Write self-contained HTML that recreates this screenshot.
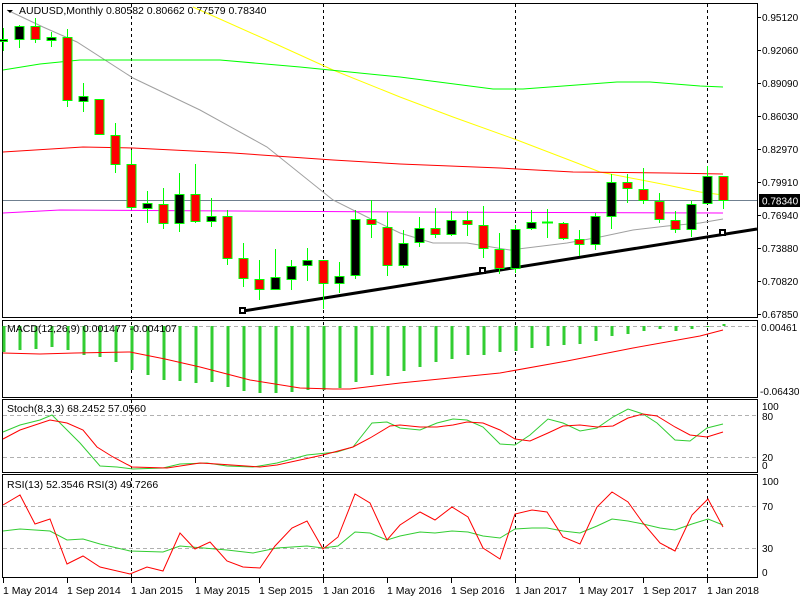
<!DOCTYPE html>
<html><head><meta charset="utf-8"><style>
html,body{margin:0;padding:0;background:#fff;width:800px;height:600px;overflow:hidden}
svg{display:block}
text{font-family:"Liberation Sans",sans-serif;font-size:10.5px;fill:#000}
.ax text{font-size:10px}
</style></head><body>
<svg width="800" height="600" viewBox="0 0 800 600" xmlns="http://www.w3.org/2000/svg">
<rect width="800" height="600" fill="#fff"/>
<g fill="none" stroke="#000" stroke-width="1">
<rect x="2.5" y="3.5" width="755" height="314"/>
<rect x="2.5" y="320.5" width="755" height="77"/>
<rect x="2.5" y="399.5" width="755" height="73"/>
<rect x="2.5" y="474.5" width="755" height="103"/>
</g>
<g stroke="#b0b0b0" stroke-dasharray="4,3" stroke-width="1">
<line x1="3" x2="757" y1="326.5" y2="326.5"/>
<line x1="3" x2="757" y1="415.5" y2="415.5"/>
<line x1="3" x2="757" y1="457.5" y2="457.5"/>
<line x1="3" x2="757" y1="506.5" y2="506.5"/>
<line x1="3" x2="757" y1="548.5" y2="548.5"/>
</g>
<g stroke="#000" stroke-dasharray="3,3" stroke-width="1">
<line x1="131.5" x2="131.5" y1="4" y2="578"/>
<line x1="323.5" x2="323.5" y1="4" y2="578"/>
<line x1="515.5" x2="515.5" y1="4" y2="578"/>
<line x1="707.5" x2="707.5" y1="4" y2="578"/>
</g>
<line x1="3" x2="757" y1="200.5" y2="200.5" stroke="#708090"/>
<g fill="none" stroke-width="1">
<polyline stroke="#a0a0a0" points="7,10 43,27 77,42 133,78 200,110 267,147 333,200 367,217 400,233 433,243 467,243 510,250 567,243 600,237 633,230 667,226 700,223 723,219"/>
<polyline stroke="#ffff00" points="193,7 267,40 333,70 400,97 453,117 517,140 577,163 600,172 667,185 700,192 723,195"/>
<polyline stroke="#00ff00" points="3,70 40,64 80,60 220,60 300,67 400,77 493,89 523,89 617,82 650,82 700,86 723,87"/>
<polyline stroke="#ff0000" points="3,152 83,147 133,148 233,153 333,160 400,164 500,168 573,172 667,173 723,174"/>
<polyline stroke="#ff00ff" points="3,213 60,210 400,212 723,213"/>
</g>
<line x1="243" y1="311" x2="757" y2="229" stroke="#000" stroke-width="3"/>
<g fill="#fff" stroke="#000" stroke-width="2"><rect x="240" y="308" width="5" height="5"/><rect x="480" y="268" width="5" height="5"/><rect x="720" y="230" width="5" height="5"/></g>
<g stroke="#00ff00" stroke-width="1">
<line x1="3.5" x2="3.5" y1="28" y2="51"/><rect x="-1.5" y="39.5" width="9" height="2" fill="#000"/>
<line x1="19.5" x2="19.5" y1="25" y2="48"/><rect x="15" y="26.5" width="9" height="13" fill="#000"/>
<line x1="35.5" x2="35.5" y1="18" y2="43"/><rect x="31" y="26.5" width="9" height="13" fill="#f00"/>
<line x1="51.5" x2="51.5" y1="32" y2="47"/><rect x="47" y="37.5" width="9" height="3" fill="#000"/>
<line x1="67.5" x2="67.5" y1="29" y2="107"/><rect x="63" y="37.5" width="9" height="63" fill="#f00"/>
<line x1="83.5" x2="83.5" y1="83" y2="112"/><rect x="79" y="96.5" width="9" height="5" fill="#000"/>
<line x1="99.5" x2="99.5" y1="99" y2="135"/><rect x="95" y="99.5" width="9" height="35" fill="#f00"/>
<line x1="115.5" x2="115.5" y1="123" y2="173"/><rect x="111" y="135.5" width="9" height="29" fill="#f00"/>
<line x1="131.5" x2="131.5" y1="150" y2="210"/><rect x="127" y="164.5" width="9" height="43" fill="#f00"/>
<line x1="147.5" x2="147.5" y1="191" y2="223"/><rect x="143" y="203.5" width="9" height="5" fill="#000"/>
<line x1="163.5" x2="163.5" y1="188" y2="229"/><rect x="159" y="204.5" width="9" height="19" fill="#f00"/>
<line x1="179.5" x2="179.5" y1="173" y2="232"/><rect x="175" y="194.5" width="9" height="29" fill="#000"/>
<line x1="195.5" x2="195.5" y1="164" y2="223"/><rect x="191" y="194.5" width="9" height="27" fill="#f00"/>
<line x1="211.5" x2="211.5" y1="198" y2="227"/><rect x="207" y="216.5" width="9" height="5" fill="#000"/>
<line x1="227.5" x2="227.5" y1="210" y2="265"/><rect x="223" y="216.5" width="9" height="42" fill="#f00"/>
<line x1="243.5" x2="243.5" y1="243" y2="287"/><rect x="239" y="258.5" width="9" height="20" fill="#f00"/>
<line x1="259.5" x2="259.5" y1="260" y2="300"/><rect x="255" y="279.5" width="9" height="10" fill="#f00"/>
<line x1="275.5" x2="275.5" y1="249" y2="290"/><rect x="271" y="277.5" width="9" height="12" fill="#000"/>
<line x1="291.5" x2="291.5" y1="260" y2="290"/><rect x="287" y="266.5" width="9" height="13" fill="#000"/>
<line x1="307.5" x2="307.5" y1="248" y2="281"/><rect x="303" y="260.5" width="9" height="5" fill="#000"/>
<line x1="323.5" x2="323.5" y1="260" y2="309"/><rect x="319" y="260.5" width="9" height="23" fill="#f00"/>
<line x1="339.5" x2="339.5" y1="262" y2="293"/><rect x="335" y="276.5" width="9" height="7" fill="#000"/>
<line x1="355.5" x2="355.5" y1="210" y2="279"/><rect x="351" y="219.5" width="9" height="56" fill="#000"/>
<line x1="371.5" x2="371.5" y1="200" y2="238"/><rect x="367" y="219.5" width="9" height="5" fill="#f00"/>
<line x1="387.5" x2="387.5" y1="212" y2="276"/><rect x="383" y="227.5" width="9" height="38" fill="#f00"/>
<line x1="403.5" x2="403.5" y1="230" y2="268"/><rect x="399" y="243.5" width="9" height="22" fill="#000"/>
<line x1="419.5" x2="419.5" y1="217" y2="247"/><rect x="415" y="228.5" width="9" height="14" fill="#000"/>
<line x1="435.5" x2="435.5" y1="208" y2="238"/><rect x="431" y="228.5" width="9" height="6" fill="#f00"/>
<line x1="451.5" x2="451.5" y1="211" y2="236"/><rect x="447" y="220.5" width="9" height="14" fill="#000"/>
<line x1="467.5" x2="467.5" y1="211" y2="236"/><rect x="463" y="220.5" width="9" height="4" fill="#f00"/>
<line x1="483.5" x2="483.5" y1="206" y2="258"/><rect x="479" y="225.5" width="9" height="23" fill="#f00"/>
<line x1="499.5" x2="499.5" y1="233" y2="274"/><rect x="495" y="249.5" width="9" height="19" fill="#f00"/>
<line x1="515.5" x2="515.5" y1="225" y2="273"/><rect x="511" y="229.5" width="9" height="39" fill="#000"/>
<line x1="531.5" x2="531.5" y1="210" y2="230"/><rect x="527" y="222.5" width="9" height="6" fill="#000"/>
<line x1="547.5" x2="547.5" y1="209" y2="238"/><line x1="542" x2="553" y1="222.5" y2="222.5" stroke-width="2"/>
<line x1="563.5" x2="563.5" y1="222" y2="240"/><rect x="559" y="223.5" width="9" height="15" fill="#f00"/>
<line x1="579.5" x2="579.5" y1="230" y2="256"/><rect x="575" y="239.5" width="9" height="5" fill="#f00"/>
<line x1="595.5" x2="595.5" y1="213" y2="250"/><rect x="591" y="216.5" width="9" height="28" fill="#000"/>
<line x1="611.5" x2="611.5" y1="174" y2="229"/><rect x="607" y="182.5" width="9" height="34" fill="#000"/>
<line x1="627.5" x2="627.5" y1="174" y2="203"/><rect x="623" y="182.5" width="9" height="6" fill="#f00"/>
<line x1="643.5" x2="643.5" y1="168" y2="204"/><rect x="639" y="189.5" width="9" height="11" fill="#f00"/>
<line x1="659.5" x2="659.5" y1="193" y2="223"/><rect x="655" y="201.5" width="9" height="18" fill="#f00"/>
<line x1="675.5" x2="675.5" y1="211" y2="233"/><rect x="671" y="220.5" width="9" height="9" fill="#f00"/>
<line x1="691.5" x2="691.5" y1="201" y2="237"/><rect x="687" y="204.5" width="9" height="25" fill="#000"/>
<line x1="707.5" x2="707.5" y1="166" y2="203"/><rect x="703" y="176.5" width="9" height="27" fill="#000"/>
<line x1="723.5" x2="723.5" y1="176" y2="209"/><rect x="719" y="176.5" width="9" height="24" fill="#f00"/>
</g>
<g stroke="#32cd32" stroke-width="3">
<line x1="4" x2="4" y1="326" y2="352"/><line x1="20" x2="20" y1="326" y2="350"/><line x1="36" x2="36" y1="326" y2="349"/><line x1="52" x2="52" y1="326" y2="347"/><line x1="68" x2="68" y1="326" y2="350"/><line x1="84" x2="84" y1="326" y2="355"/><line x1="100" x2="100" y1="326" y2="357"/><line x1="116" x2="116" y1="326" y2="362"/><line x1="132" x2="132" y1="326" y2="370"/><line x1="148" x2="148" y1="326" y2="375"/><line x1="164" x2="164" y1="326" y2="380"/><line x1="180" x2="180" y1="326" y2="381"/><line x1="196" x2="196" y1="326" y2="383"/><line x1="212" x2="212" y1="326" y2="382"/><line x1="228" x2="228" y1="326" y2="387"/><line x1="244" x2="244" y1="326" y2="391"/><line x1="260" x2="260" y1="326" y2="393"/><line x1="276" x2="276" y1="326" y2="393"/><line x1="292" x2="292" y1="326" y2="392"/><line x1="308" x2="308" y1="326" y2="390"/><line x1="324" x2="324" y1="326" y2="390"/><line x1="340" x2="340" y1="326" y2="388"/><line x1="356" x2="356" y1="326" y2="382"/><line x1="372" x2="372" y1="326" y2="375"/><line x1="388" x2="388" y1="326" y2="376"/><line x1="404" x2="404" y1="326" y2="371"/><line x1="420" x2="420" y1="326" y2="367"/><line x1="436" x2="436" y1="326" y2="362"/><line x1="452" x2="452" y1="326" y2="359"/><line x1="468" x2="468" y1="326" y2="355"/><line x1="484" x2="484" y1="326" y2="355"/><line x1="500" x2="500" y1="326" y2="352"/><line x1="516" x2="516" y1="326" y2="351"/><line x1="532" x2="532" y1="326" y2="348"/><line x1="548" x2="548" y1="326" y2="346"/><line x1="564" x2="564" y1="326" y2="345"/><line x1="580" x2="580" y1="326" y2="344"/><line x1="596" x2="596" y1="326" y2="341"/><line x1="612" x2="612" y1="326" y2="336"/><line x1="628" x2="628" y1="326" y2="334"/><line x1="644" x2="644" y1="326" y2="331"/><line x1="660" x2="660" y1="326" y2="329"/><line x1="676" x2="676" y1="326" y2="331"/><line x1="692" x2="692" y1="326" y2="329"/><line x1="708" x2="708" y1="326" y2="327"/><line x1="724" x2="724" y1="324" y2="326"/>
</g>
<polyline fill="none" stroke="#f00" points="3,353 40,354 75,353 130,352 165,359 200,367 250,380 300,388 333,389 350,389 400,383 500,373 567,361 633,348 700,336 723,330"/>
<g fill="none">
<polyline stroke="#32cd32" points="3,432 20,425 40,420 52,415 57,420 80,443 100,466 117,467 133,469 163,468 180,464 207,463 227,466 253,467 277,463 307,455 337,452 353,447 372,423 387,422 400,428 420,430 437,423 453,419 467,420 483,427 500,444 515,445 530,435 548,419 563,423 580,431 597,428 613,417 628,409 643,414 657,423 675,440 690,441 707,428 723,424"/>
<polyline stroke="#f00" points="3,439 20,430 50,420 67,423 83,430 97,447 113,457 132,467 167,468 200,463 217,464 260,467 277,465 323,455 353,447 370,438 390,426 400,425 420,427 437,427 453,425 467,422 483,423 500,430 515,439 530,441 548,433 563,426 580,425 597,427 613,426 628,418 643,414 657,416 675,427 690,435 707,437 723,432"/>
</g>
<g fill="none">
<polyline stroke="#32cd32" points="3,531 20,529 50,531 67,540 83,539 100,544 130,551 163,552 180,546 227,550 253,553 277,548 307,546 323,548 338,546 355,532 370,533 387,540 400,536 420,532 435,533 452,531 468,532 483,536 500,538 515,529 532,528 547,528 563,531 580,533 597,526 612,519 628,521 643,524 660,528 675,530 692,524 708,519 723,525"/>
<polyline stroke="#f00" points="3,505 20,495 35,524 50,519 67,564 83,556 100,567 130,574 147,567 163,571 180,533 195,549 210,542 227,561 243,567 260,568 275,546 292,528 307,521 323,549 338,537 355,494 370,503 387,540 400,525 420,512 435,520 452,507 468,517 483,548 500,559 515,514 532,510 547,512 563,537 580,544 597,507 612,492 628,502 643,523 660,543 675,551 692,515 708,499 723,527"/>
</g>
<g stroke="#000">
<line x1="757" x2="761" y1="17.5" y2="17.5"/><line x1="757" x2="761" y1="50.5" y2="50.5"/><line x1="757" x2="761" y1="83.5" y2="83.5"/><line x1="757" x2="761" y1="116.5" y2="116.5"/><line x1="757" x2="761" y1="149.5" y2="149.5"/><line x1="757" x2="761" y1="182.5" y2="182.5"/><line x1="757" x2="761" y1="215.5" y2="215.5"/><line x1="757" x2="761" y1="248.5" y2="248.5"/><line x1="757" x2="761" y1="281.5" y2="281.5"/><line x1="757" x2="761" y1="314.5" y2="314.5"/>
<line x1="3.5" x2="3.5" y1="578" y2="583"/><line x1="67.5" x2="67.5" y1="578" y2="583"/><line x1="131.5" x2="131.5" y1="578" y2="583"/><line x1="195.5" x2="195.5" y1="578" y2="583"/><line x1="259.5" x2="259.5" y1="578" y2="583"/><line x1="323.5" x2="323.5" y1="578" y2="583"/><line x1="387.5" x2="387.5" y1="578" y2="583"/><line x1="451.5" x2="451.5" y1="578" y2="583"/><line x1="515.5" x2="515.5" y1="578" y2="583"/><line x1="579.5" x2="579.5" y1="578" y2="583"/><line x1="643.5" x2="643.5" y1="578" y2="583"/><line x1="707.5" x2="707.5" y1="578" y2="583"/>
</g>
<g class="ax">
<text x="762" y="21">0.95120</text><text x="762" y="54">0.92060</text><text x="762" y="87">0.89090</text><text x="762" y="120">0.86030</text><text x="762" y="153">0.82970</text><text x="762" y="186">0.79910</text>
<rect x="759" y="194" width="41" height="13" fill="#000"/><text x="762" y="204.5" style="fill:#fff">0.78340</text>
<text x="762" y="219">0.76940</text><text x="762" y="252">0.73880</text><text x="762" y="285">0.70820</text><text x="762" y="318">0.67850</text>
<text x="761" y="331">0.00461</text><text x="760" y="395">-0.064305</text>
<text x="762" y="410">100</text><text x="762" y="420">80</text><text x="762" y="461">20</text><text x="762" y="469">0</text>
<text x="762" y="485">100</text><text x="762" y="510">70</text><text x="762" y="552">30</text><text x="762" y="576">0</text>
</g>
<path d="M7,10 L13,10 L10,13 Z" fill="#000"/>
<text x="19" y="14">AUDUSD,Monthly  0.80582 0.80662 0.77579 0.78340</text>
<text x="7" y="332">MACD(12,26,9) 0.001477 -0.004107</text>
<text x="7" y="412">Stoch(8,3,3) 68.2452 57.0560</text>
<text x="7" y="488">RSI(13) 52.3546  RSI(3) 49.7266</text>
<g>
<text x="3" y="594">1 May 2014</text><text x="67" y="594">1 Sep 2014</text><text x="131" y="594">1 Jan 2015</text><text x="195" y="594">1 May 2015</text><text x="259" y="594">1 Sep 2015</text><text x="323" y="594">1 Jan 2016</text><text x="387" y="594">1 May 2016</text><text x="451" y="594">1 Sep 2016</text><text x="515" y="594">1 Jan 2017</text><text x="579" y="594">1 May 2017</text><text x="643" y="594">1 Sep 2017</text><text x="707" y="594">1 Jan 2018</text>
</g>
</svg>
</body></html>
